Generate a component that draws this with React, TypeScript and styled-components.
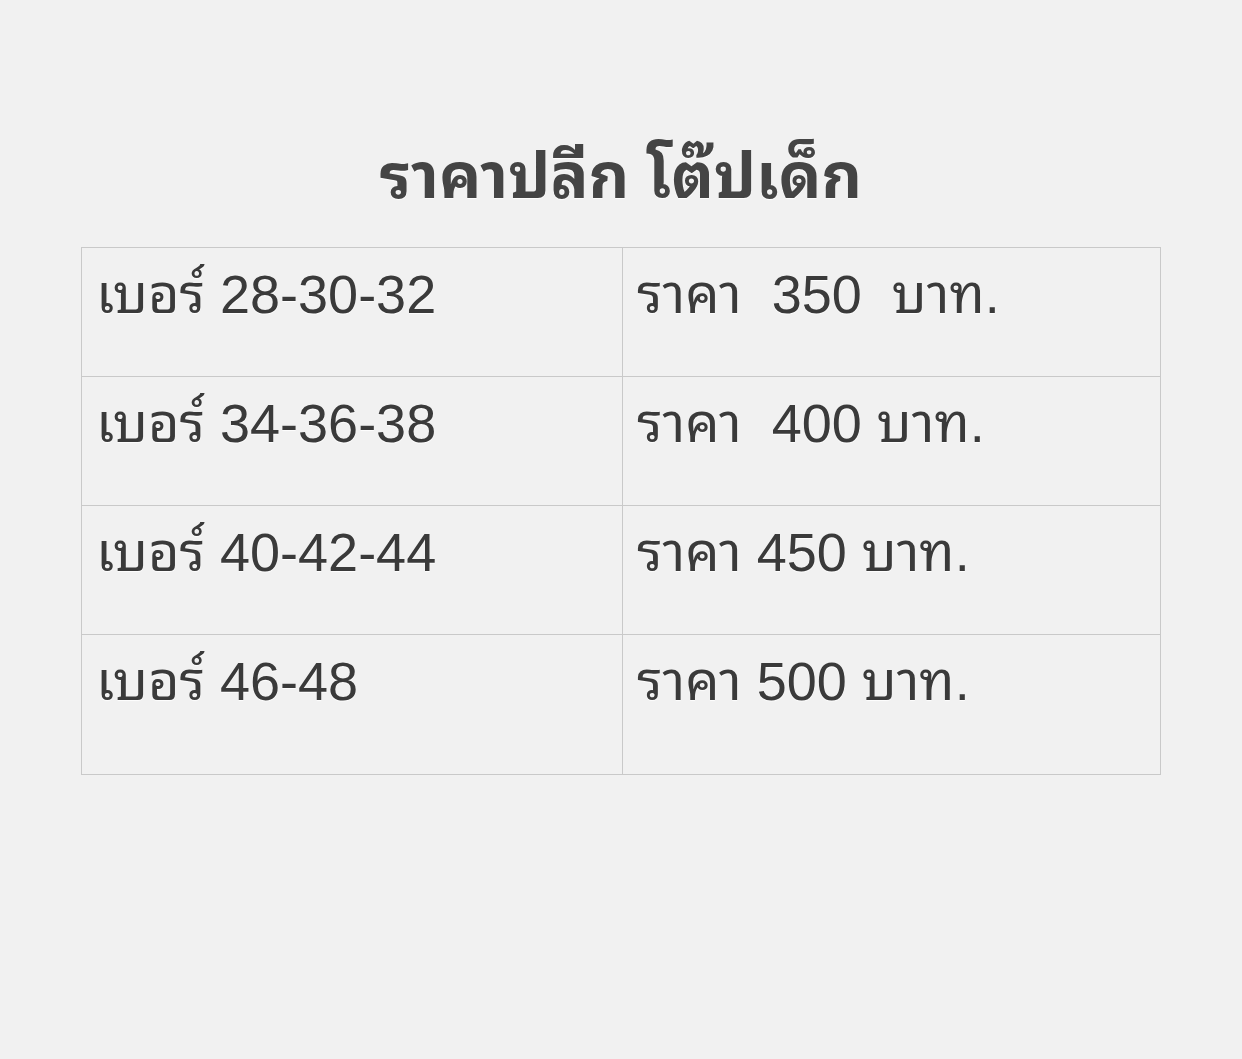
import React from "react";
import styled, { createGlobalStyle } from "styled-components";

const GlobalStyle = createGlobalStyle`
    html, body {
        margin: 0;
        padding: 0;
        background: #f1f1f1;
    }
    body {
        font-family: "Liberation Sans", "Noto Sans Thai Looped", "Loma", "Waree", "Noto Sans", sans-serif;
        color: #3a3a3a;
    }
`;

const rows = [
    { size: "เบอร์ 28-30-32", price: "ราคา  350  บาท." },
    { size: "เบอร์ 34-36-38", price: "ราคา  400 บาท." },
    { size: "เบอร์ 40-42-44", price: "ราคา 450 บาท." },
    { size: "เบอร์ 46-48", price: "ราคา 500 บาท." },
];

const App = () => {
    return (
        <Page>
            <GlobalStyle />
            <Title>ราคาปลีก โต๊ปเด็ก</Title>
            <PriceTable>
                {rows.map((row, i) => (
                    <Row key={row.size} last={i === rows.length - 1}>
                        <Cell>{row.size}</Cell>
                        <Cell>{row.price}</Cell>
                    </Row>
                ))}
            </PriceTable>
        </Page>
    );
};

const Page = styled.div`
    width: 1242px;
    min-height: 1059px;
    box-sizing: border-box;
    padding-top: 136px;
    display: flex;
    flex-direction: column;
    align-items: center;
    background: #f1f1f1;
`;

const Title = styled.h1`
    margin: 0 0 31px;
    font-size: 63px;
    font-weight: 700;
    line-height: 80px;
    color: #444444;
    text-shadow: 0 1px 1px rgba(255, 255, 255, 0.9);
`;

const PriceTable = styled.div`
    width: 1080px;
    box-sizing: border-box;
    border: 1px solid #c9c9c9;
    display: flex;
    flex-direction: column;
`;

const Row = styled.div<{ last: boolean }>`
    display: grid;
    grid-template-columns: 540px 1fr;
    height: ${({ last }) => (last ? "139px" : "128px")};
    border-bottom: ${({ last }) => (last ? "none" : "1px solid #c9c9c9")};

    & > div + div {
        border-left: 1px solid #c9c9c9;
    }
`;

const Cell = styled.div`
    padding: 11px 14px 0;
    font-size: 54px;
    line-height: 70px;
    color: #3a3a3a;
    white-space: pre;
    text-shadow: 0 1px 1px rgba(255, 255, 255, 0.9);
`;

export default App;
